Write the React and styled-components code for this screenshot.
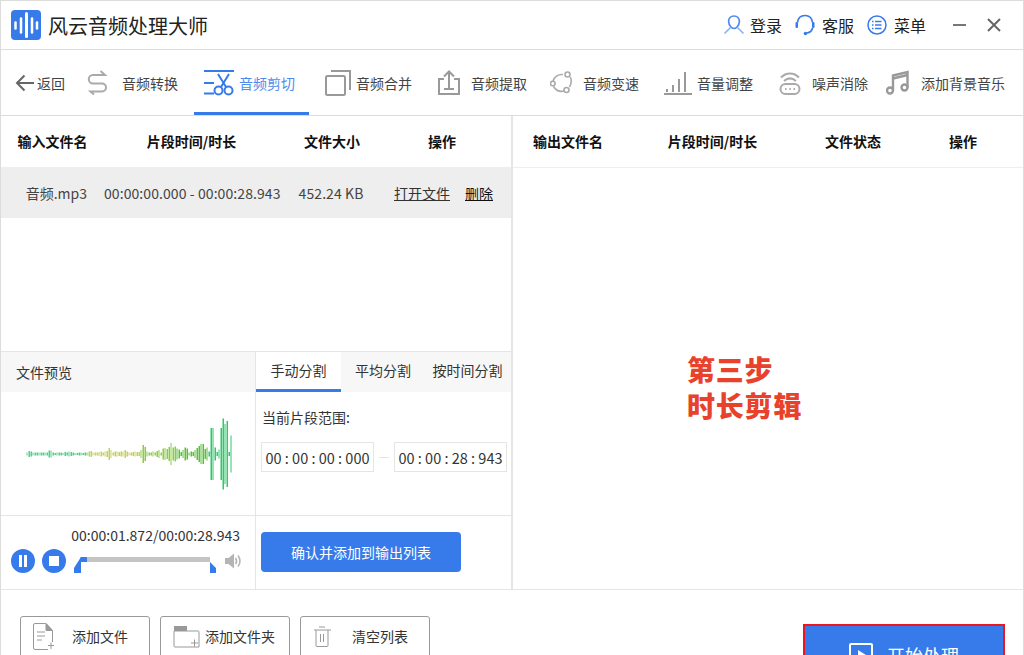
import styled, { createGlobalStyle } from "styled-components";

const blue = "#377bea";
const line = "#e5e5e5";
const grey = "#999";

const GlobalStyle = createGlobalStyle`
  html, body {
    margin: 0;
    padding: 0;
    background: #fff;
  }
  * {
    box-sizing: border-box;
  }
`;

const Page = styled.div`
  width: 1024px;
  height: 655px;
  overflow: hidden;
  display: flex;
  flex-direction: column;
  background: #fff;
  border-top: 1px solid #dcdcdc;
  border-left: 1px solid #dcdcdc;
  border-right: 1px solid #dcdcdc;
  color: #333;
  font-family: "Noto Sans CJK SC", "Liberation Sans", sans-serif;
  font-size: 14px;
`;

const TitleBar = styled.header`
  flex: 0 0 49px;
  display: flex;
  align-items: center;
  padding: 0 22px 0 10px;
  border-bottom: 1px solid #dcdcdc;
`;

const AppTitle = styled.h1`
  margin: 0 auto 0 7px;
  font-size: 20px;
  font-weight: 400;
  color: #222;
`;

const HeadAction = styled.div`
  display: flex;
  align-items: center;
  gap: ${(p) => p.$gap || 6}px;
  margin-right: 13px;
  font-size: 16px;
  color: #222;
`;

const WindowButton = styled.div`
  display: flex;
  margin-left: ${(p) => p.$left}px;
`;

const Toolbar = styled.nav`
  flex: 0 0 66px;
  display: flex;
  align-items: stretch;
  padding-left: 14px;
  border-bottom: 1px solid #dcdcdc;
`;

const ToolItem = styled.div`
  display: flex;
  align-items: center;
  margin-left: ${(p) => p.$left || 0}px;
  gap: ${(p) => p.$gap}px;
  padding: ${(p) => (p.$active ? "3px 14px 0 10px" : "3px 0 0")};
  border-bottom: 3px solid ${(p) => (p.$active ? blue : "transparent")};
  color: ${(p) => (p.$active ? "#4f8bec" : "#444")};
  font-size: 14px;
  white-space: nowrap;
`;

const Main = styled.main`
  flex: 0 0 474px;
  display: flex;
  border-bottom: 1px solid ${line};
`;

const LeftPanel = styled.section`
  flex: 0 0 510px;
  display: flex;
  flex-direction: column;
`;

const RightPanel = styled.section`
  flex: 1;
  display: flex;
  flex-direction: column;
  border-left: 2px solid ${line};
`;

const TableHead = styled.div`
  flex: 0 0 52px;
  display: grid;
  grid-template-columns: ${(p) => p.$cols};
  align-items: center;
  padding-bottom: 2px;
  text-align: center;
  font-weight: 700;
  color: #111;
  border-bottom: 1px solid #eee;
`;

const FileRow = styled.div`
  flex: 0 0 50px;
  display: grid;
  grid-template-columns: 103px 176px 102px 1fr;
  align-items: center;
  background: #eee;
  color: #444;
  white-space: nowrap;
`;

const FileName = styled.div`
  text-align: right;
  padding-right: 17px;
`;

const Centered = styled.div`
  text-align: center;
  letter-spacing: 0.08px;
`;

const RowActions = styled.div`
  display: flex;
  gap: 15px;
  padding-left: 12px;
`;

const RowLink = styled.span`
  text-decoration: underline;
  color: ${(p) => (p.$dark ? "#111" : "#333")};
`;

const ListSpace = styled.div`
  flex: 1;
`;

const Lower = styled.div`
  flex: 0 0 238px;
  display: grid;
  grid-template-columns: 255px 1fr;
  grid-template-rows: 164px 1fr;
  border-top: 1px solid ${line};
`;

const PreviewCell = styled.div`
  display: flex;
  flex-direction: column;
  border-right: 1px solid ${line};
  border-bottom: 1px solid ${line};
`;

const PreviewHead = styled.div`
  flex: 0 0 40px;
  display: flex;
  align-items: center;
  padding-left: 15px;
  background: #f7f7f7;
`;

const WaveBox = styled.div`
  flex: 1;
  display: flex;
  padding: 26px 0 0 25px;
`;

const SplitCell = styled.div`
  display: flex;
  flex-direction: column;
  border-bottom: 1px solid ${line};
`;

const Tabs = styled.div`
  flex: 0 0 40px;
  display: flex;
  background: #f7f7f7;
`;

const Tab = styled.div`
  flex: 0 0 ${(p) => p.$width}px;
  display: flex;
  align-items: center;
  justify-content: center;
  padding-bottom: 1px;
  background: ${(p) => (p.$active ? "#fff" : "transparent")};
  border-bottom: 3px solid ${(p) => (p.$active ? blue : "transparent")};
`;

const RangeLabel = styled.div`
  margin: 15px 0 0 6px;
  line-height: 20px;
`;

const RangeRow = styled.div`
  display: flex;
  align-items: center;
  margin: 15px 0 0 5px;
`;

const TimeBox = styled.div`
  flex: 0 0 113px;
  height: 30px;
  display: flex;
  align-items: center;
  justify-content: center;
  border: 1px solid ${line};
  font-size: 14.5px;
  white-space: pre;
`;

const Dash = styled.div`
  flex: 0 0 10px;
  height: 1px;
  margin: 0 5px;
  background: ${line};
`;

const PlayerCell = styled.div`
  display: flex;
  flex-direction: column;
  border-right: 1px solid ${line};
`;

const PlayTime = styled.div`
  margin: 9px 15px 0 0;
  text-align: right;
  line-height: 20px;
`;

const PlayerRow = styled.div`
  display: flex;
  align-items: center;
  margin: 4px 0 0 10px;
`;

const RoundButton = styled.div`
  width: 24px;
  height: 24px;
  margin-right: 7px;
  display: flex;
  align-items: center;
  justify-content: center;
  border-radius: 50%;
  background: ${blue};
`;

const Slider = styled.div`
  position: relative;
  flex: 0 0 130px;
  height: 5px;
  margin: -3px 15px 0 7px;
  background: #c4c4c4;
`;

const Handle = styled.svg`
  position: absolute;
  top: 0;
  ${(p) => (p.$right ? "right: -6px;" : "left: -6px;")}
`;

const ConfirmCell = styled.div`
  padding: 16px 0 0 5px;
`;

const ConfirmButton = styled.div`
  width: 200px;
  height: 40px;
  display: flex;
  align-items: center;
  justify-content: center;
  border-radius: 4px;
  background: ${blue};
  color: #fff;
`;

const Annotation = styled.div`
  padding: 183px 0 0 174px;
  color: #e8412c;
  font-size: 28px;
  font-weight: 900;
  line-height: 36px;
  letter-spacing: 0.8px;
`;

const Footer = styled.footer`
  flex: 1;
  display: flex;
  align-items: flex-start;
  padding: 26px 0 0 19px;
`;

const FooterButton = styled.div`
  flex: 0 0 130px;
  height: 60px;
  margin-right: 10px;
  padding: 0 0 20px ${(p) => p.$pad}px;
  display: flex;
  align-items: center;
  gap: ${(p) => p.$gap}px;
  border: 1px solid ${grey};
  border-radius: 3px;
  white-space: nowrap;
`;

const StartButton = styled.div`
  width: 202px;
  height: 62px;
  margin: 8px 18px 0 auto;
  display: flex;
  align-items: center;
  justify-content: center;
  gap: 14px;
  background: ${blue};
  border: 2px solid #f0141e;
  color: #fff;
  font-size: 18px;
`;

const Logo = () => (
  <svg width="30" height="30" viewBox="0 0 30 30">
    <rect width="30" height="30" rx="4" fill={blue} />
    <g stroke="#fff" strokeLinecap="round" fill="none">
      <path d="M4.500 12.500v6" strokeWidth="2.500" />
      <path d="M10 8.500v14" strokeWidth="2.500" />
      <path d="M15.500 3.500v23" strokeWidth="3" />
      <path d="M21 8.500v14" strokeWidth="2.500" />
      <path d="M26 12.500v6" strokeWidth="2.500" />
    </g>
  </svg>
);

const UserIcon = () => (
  <svg width="22" height="22" viewBox="0 0 22 22" fill="none" stroke="#4f8bec" strokeWidth="1.700">
    <path d="M11 2c-3.400 0-5.400 2.400-5.400 5.600 0 2.600 1.200 4.500 2.700 5.800 1.700 1.300 3.700 1.300 5.400 0 1.500-1.300 2.700-3.200 2.700-5.800C16.400 4.400 14.400 2 11 2z" />
    <path d="M7.500 13.500L1.500 19.500M14.500 13.500l6 6" stroke="#8db5f2" />
  </svg>
);

const HeadsetIcon = () => (
  <svg width="20" height="22" viewBox="0 0 20 22" fill="none" stroke={blue} strokeWidth="1.700">
    <path d="M2.500 8.500C3 4 6 1.500 10 1.500S17 4 17.500 8.500" />
    <path d="M17.500 14c-.5 3-2.500 4.500-5.500 5" />
    <rect x="0.500" y="8" width="2.500" height="6" rx="1" fill={blue} stroke="none" />
    <rect x="17" y="8" width="2.500" height="6" rx="1" fill={blue} stroke="none" />
    <circle cx="10.500" cy="19.500" r="1.800" fill={blue} stroke="none" />
  </svg>
);

const MenuIcon = () => (
  <svg width="20" height="20" viewBox="0 0 20 20" fill="none" stroke={blue} strokeWidth="1.500">
    <circle cx="10" cy="10" r="9" />
    <path d="M8 6.500h6.500M8 10h6.500M8 13.500h6.500" />
    <path d="M5 6.500h1.500M5 10h1.500M5 13.500h1.500" />
  </svg>
);

const BackIcon = () => (
  <svg width="19" height="18" viewBox="0 0 19 18" fill="none" stroke="#666" strokeWidth="2">
    <path d="M19 9H2M9.500 1.500L2 9l7.500 7.500" />
  </svg>
);

const SwapIcon = () => (
  <svg width="21" height="25" viewBox="0 0 21 25" fill="none" stroke="#aaa" strokeWidth="2">
    <path d="M13.500 1l4.500 4H6a4 4 0 0 0 0 8.500h9a4 4 0 0 1 0 8H3.500l3.500 3" />
  </svg>
);

const ScissorsIcon = () => (
  <svg width="30" height="26" viewBox="0 0 30 26" fill="none" stroke={blue} strokeWidth="2">
    <path d="M0 1h30M0 13h10M0 23.500h10" />
    <path d="M14 4l8 13M25 4l-8 13" />
    <circle cx="14.500" cy="20.500" r="4" />
    <circle cx="24.500" cy="20.500" r="4" />
  </svg>
);

const MergeIcon = () => (
  <svg width="26" height="26" viewBox="0 0 26 26" fill="none" stroke="#999" strokeWidth="2">
    <path d="M6 1h19v19" />
    <rect x="1" y="6" width="19" height="19" rx="1.500" />
  </svg>
);

const ExtractIcon = () => (
  <svg width="22" height="25" viewBox="0 0 22 25" fill="none" stroke="#999" strokeWidth="2">
    <path d="M6 9H1v15h20V9h-5" />
    <path d="M11 18V2M6 6.500L11 1.500l5 5" />
    <path d="M6 19h10" />
  </svg>
);

const SpeedIcon = () => (
  <svg width="23" height="24" viewBox="0 0 23 24" fill="none" stroke="#aaa" strokeWidth="1.600">
    <path d="M13 3.500C8 3 4 6 3 10M3.500 15.500C6 19.500 10 21 14 20M19.500 16c2-3.500 2.200-7 .8-10" />
    <circle cx="17.500" cy="3.500" r="2.500" />
    <circle cx="2.800" cy="12.500" r="2.300" />
    <circle cx="16.500" cy="19" r="2.500" />
  </svg>
);

const VolumeIcon = () => (
  <svg width="28" height="24" viewBox="0 0 28 24" fill="none" stroke="#999" strokeWidth="2">
    <path d="M0 23h28M3 18v3M9 14v7M15 8v13M21 1v20" />
  </svg>
);

const NoiseIcon = () => (
  <svg width="22" height="24" viewBox="0 0 22 24" fill="none" stroke="#aaa" strokeWidth="2">
    <path d="M2 6.500C7 1 15 1 20 6.500M5 10c4-3.500 8-3.500 12 0" />
    <rect x="1.500" y="13" width="19" height="10" rx="5" />
    <path d="M6 18h1.500M10.300 18h1.500M14.500 18H16" />
  </svg>
);

const MusicIcon = () => (
  <svg width="23" height="25" viewBox="0 0 23 25" fill="none" stroke="#999" strokeWidth="2.400">
    <path d="M7 20V5.500L21.500 2v15.500" />
    <circle cx="4" cy="20.500" r="3" />
    <circle cx="18.500" cy="17.500" r="3" />
    <path d="M7 8.500l14.500-3.500" />
  </svg>
);

const SpeakerIcon = () => (
  <svg width="18" height="16" viewBox="0 0 18 16" fill="#b5b5b5">
    <path d="M0 5h3.500L9 .5v15L3.500 11H0z" />
    <path d="M10.500 5c1.300 1.800 1.300 4.200 0 6M13 2.500c2.600 3.200 2.600 7.800 0 11" fill="none" stroke="#b5b5b5" strokeWidth="1.600" />
  </svg>
);

const FileIcon = () => (
  <svg width="21" height="27" viewBox="0 0 21 27" fill="none" stroke="#999">
    <path d="M12.500 .5H2A1.500 1.500 0 0 0 .5 2v23A1.500 1.500 0 0 0 2 26.500h13" />
    <path d="M13 .5l6.500 7V19" />
    <path d="M13 .5v7h6.500z" fill="#999" />
    <path d="M4 9h8M4 13h8M4 17h5M15 22.500h6M18 19.500v6.500" />
  </svg>
);

const FolderIcon = () => (
  <svg width="27" height="23" viewBox="0 0 27 23" fill="none" stroke="#999">
    <rect x="1" y="1" width="13" height="5" fill="#999" stroke="none" />
    <path d="M1 6h24.500a.8.800 0 0 1 .5.800V22H2a1 1 0 0 1-1-1z" />
    <path d="M18 18h7M21.500 14.500v7" />
  </svg>
);

const TrashIcon = () => (
  <svg width="18" height="21" viewBox="0 0 18 21" fill="none" stroke="#999">
    <path d="M1 4h17M6 1h6" strokeWidth="1.200" />
    <path d="M3 4v15.500a1 1 0 0 0 1 1h10a1 1 0 0 0 1-1V4" />
    <path d="M7.500 8v8M10.500 8v8" />
  </svg>
);

// amplitudes of the wave, one bar every 2px
const waveBars = [
  3, 6, 5, 3, 3, 3, 3, 3, 3, 3, 3, 7, 7, 3, 2, 3, 3, 3, 2, 4, 3, 5, 4, 3, 2, 2, 3, 3, 2, 3, 3, 5, 6, 3, 3, 3, 4,
  5, 3, 5, 6, 12, 8, 3, 5, 5, 4, 5, 5, 8, 5, 3, 3, 4, 5, 4, 4, 8, 18, 14, 5, 3, 3, 5, 3, 6, 8, 3, 11, 12, 10, 14,
  22, 13, 15, 11, 9, 4, 8, 13, 11, 3, 5, 4, 8, 12, 16, 20, 20, 10, 13, 5, 52, 52, 13, 4, 9, 52, 71, 60, 66, 4, 37,
];

const barColor = (i, total) => {
  const t = i / total;
  if (t < 0.3) return "#4fcf8a";
  if (t < 0.55) return "#c5cf5c";
  if (t < 0.72) return "#8ccb48";
  if (t < 0.88) return "#5cc03a";
  return "#2fc86a";
};

const Waveform = () => (
  <svg width="208" height="72" viewBox="0 0 208 72">
    {waveBars.map((h, i) => (
      <rect
        key={i}
        x={i * 2 + 0.5}
        y={36 - h / 2}
        width={i % 3 === 0 ? 1 : 1.5}
        height={h}
        fill={barColor(i, waveBars.length)}
      />
    ))}
  </svg>
);

const App = () => (
  <>
    <GlobalStyle />
    <Page>
      <TitleBar>
        <Logo />
        <AppTitle>风云音频处理大师</AppTitle>
        <HeadAction $gap={5}>
          <UserIcon />
          登录
        </HeadAction>
        <HeadAction $gap={7}>
          <HeadsetIcon />
          客服
        </HeadAction>
        <HeadAction $gap={7}>
          <MenuIcon />
          菜单
        </HeadAction>
        <WindowButton $left={14}>
          <svg width="13" height="2" viewBox="0 0 13 2">
            <rect width="13" height="2" fill="#777" />
          </svg>
        </WindowButton>
        <WindowButton $left={21}>
          <svg width="14" height="14" viewBox="0 0 14 14" stroke="#666" strokeWidth="2">
            <path d="M1 1l12 12M13 1L1 13" />
          </svg>
        </WindowButton>
      </TitleBar>

      <Toolbar>
        <ToolItem $gap={3}>
          <BackIcon />
          返回
        </ToolItem>
        <ToolItem $left={22} $gap={14}>
          <SwapIcon />
          音频转换
        </ToolItem>
        <ToolItem $left={16} $gap={5} $active>
          <ScissorsIcon />
          音频剪切
        </ToolItem>
        <ToolItem $left={16} $gap={5}>
          <MergeIcon />
          音频合并
        </ToolItem>
        <ToolItem $left={26} $gap={11}>
          <ExtractIcon />
          音频提取
        </ToolItem>
        <ToolItem $left={23} $gap={10}>
          <SpeedIcon />
          音频变速
        </ToolItem>
        <ToolItem $left={25} $gap={5}>
          <VolumeIcon />
          音量调整
        </ToolItem>
        <ToolItem $left={26} $gap={11}>
          <NoiseIcon />
          噪声消除
        </ToolItem>
        <ToolItem $left={18} $gap={12}>
          <MusicIcon />
          添加背景音乐
        </ToolItem>
      </Toolbar>

      <Main>
        <LeftPanel>
          <TableHead $cols="103px 175px 106px 114px">
            <div>输入文件名</div>
            <div>片段时间/时长</div>
            <div>文件大小</div>
            <div>操作</div>
          </TableHead>
          <FileRow>
            <FileName>音频.mp3</FileName>
            <Centered>00:00:00.000 - 00:00:28.943</Centered>
            <Centered>452.24 KB</Centered>
            <RowActions>
              <RowLink>打开文件</RowLink>
              <RowLink $dark>删除</RowLink>
            </RowActions>
          </FileRow>
          <ListSpace />
          <Lower>
            <PreviewCell>
              <PreviewHead>文件预览</PreviewHead>
              <WaveBox>
                <Waveform />
              </WaveBox>
            </PreviewCell>
            <SplitCell>
              <Tabs>
                <Tab $width={85} $active>
                  手动分割
                </Tab>
                <Tab $width={84}>平均分割</Tab>
                <Tab $width={85}>按时间分割</Tab>
              </Tabs>
              <RangeLabel>当前片段范围:</RangeLabel>
              <RangeRow>
                <TimeBox>00 : 00 : 00 : 000</TimeBox>
                <Dash />
                <TimeBox>00 : 00 : 28 : 943</TimeBox>
              </RangeRow>
            </SplitCell>
            <PlayerCell>
              <PlayTime>00:00:01.872/00:00:28.943</PlayTime>
              <PlayerRow>
                <RoundButton>
                  <svg width="10" height="12" viewBox="0 0 10 12" fill="#fff">
                    <rect x="1" width="3" height="12" />
                    <rect x="6" width="3" height="12" />
                  </svg>
                </RoundButton>
                <RoundButton>
                  <svg width="10" height="10" viewBox="0 0 10 10">
                    <rect width="10" height="10" fill="#fff" />
                  </svg>
                </RoundButton>
                <Slider>
                  <Handle width="13" height="16" viewBox="0 0 13 16" fill={blue}>
                    <path d="M7 0h6v5H7v11H0v-5z" />
                  </Handle>
                  <Handle $right width="6" height="16" viewBox="0 0 6 16" fill={blue}>
                    <path d="M0 0v16h6v-5L0 5z" />
                  </Handle>
                </Slider>
                <SpeakerIcon />
              </PlayerRow>
            </PlayerCell>
            <ConfirmCell>
              <ConfirmButton>确认并添加到输出列表</ConfirmButton>
            </ConfirmCell>
          </Lower>
        </LeftPanel>

        <RightPanel>
          <TableHead $cols="110px 179px 102px 118px">
            <div>输出文件名</div>
            <div>片段时间/时长</div>
            <div>文件状态</div>
            <div>操作</div>
          </TableHead>
          <Annotation>
            第三步
            <br />
            时长剪辑
          </Annotation>
        </RightPanel>
      </Main>

      <Footer>
        <FooterButton $pad={12} $gap={18}>
          <FileIcon />
          添加文件
        </FooterButton>
        <FooterButton $pad={12} $gap={5}>
          <FolderIcon />
          添加文件夹
        </FooterButton>
        <FooterButton $pad={12} $gap={21}>
          <TrashIcon />
          清空列表
        </FooterButton>
        <StartButton>
          <svg width="24" height="24" viewBox="0 0 24 24" fill="none" stroke="#fff" strokeWidth="2">
            <rect x="1" y="1" width="22" height="22" rx="1" />
            <path d="M9 7l8 5-8 5z" fill="#fff" stroke="none" />
          </svg>
          开始处理
        </StartButton>
      </Footer>
    </Page>
  </>
);

export default App;
